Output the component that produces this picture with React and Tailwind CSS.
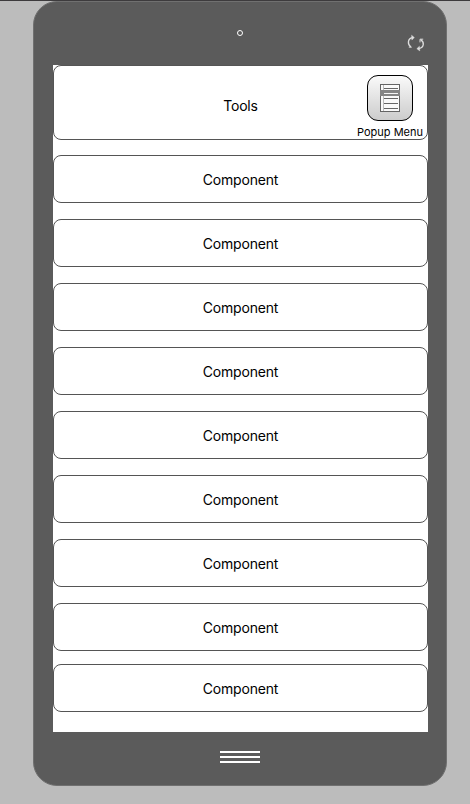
import React from "react";

function RotateIcon() {
  return (
    <svg width="18" height="18" viewBox="0 0 18 18" fill="none" stroke="#dedede" strokeWidth="1.3" className="block">
      <path d="M3.8 13 C0.2 10 0.6 4.6 5.4 3.6" />
      <path d="M4.6 1.2 L7.4 3.6 L4.9 6 Z" fill="#dedede" strokeWidth="0.4" />
      <path d="M1.8 13.2 L4.8 13.2" strokeWidth="0.9" />
      <path d="M13.6 5.6 C17.8 8.2 17 13.6 12 14.6" />
      <path d="M12.4 12.2 L9.8 14.7 L12.8 16.9 Z" fill="#dedede" strokeWidth="0.4" />
      <path d="M13 8.4 L13 5.2 L16.2 5.2" strokeWidth="1" />
    </svg>
  );
}

function MenuIcon() {
  return (
    <svg width="20" height="28" viewBox="0 0 20 28" className="block">
      <rect x="0.5" y="0.5" width="19" height="27" fill="#fafafa" stroke="#646464" />
      <rect x="3" y="1" width="1" height="26" fill="#bcbcbc" />
      <rect x="0" y="6" width="20" height="6" fill="#858585" />
      <g fill="#666666">
        <rect x="4" y="4" width="14" height="1" />
        <rect x="4" y="14" width="14" height="1" />
        <rect x="4" y="19" width="14" height="1" />
        <rect x="4" y="24" width="14" height="1" />
      </g>
      <rect x="4" y="9" width="14" height="1" fill="#f5f5f5" />
    </svg>
  );
}

function Component({ last = false }) {
  return (
    <div className={`flex h-12 shrink-0 items-center justify-center rounded-lg border border-[#555555] bg-white pt-0.5 ${last ? "mt-[13px]" : "mt-4"}`}>
      Component
    </div>
  );
}

export default function App() {
  return (
    <div className="flex h-[804px] w-[470px] flex-col border-t border-[#3d3b3d] bg-[#bcbcbc] font-['Inter','Liberation_Sans',sans-serif] text-sm leading-5 tracking-[-0.2px] text-black">
      <main className="ml-[33px] flex h-[785px] w-[414px] flex-col rounded-3xl border border-[#707070] bg-[#5b5b5b] px-[19px]">
        <header className="relative flex h-[63px] shrink-0 justify-center">
          <span className="mt-7 size-[6px] rounded-full border border-white" />
          <div className="absolute top-8 right-[2px]">
            <RotateIcon />
          </div>
        </header>
        <section className="-mr-px flex h-[667px] w-[375px] shrink-0 flex-col bg-white">
          <div className="relative flex h-[75px] shrink-0 items-center justify-center rounded-lg border border-[#555555] pt-[7px]">
            Tools
            <div className="absolute top-[9px] right-[3px] flex w-[68px] flex-col items-center">
              <div className="flex h-[46px] w-[46px] items-start justify-center rounded-[11px] border border-black bg-linear-to-b from-[#fafafa] to-[#cccccc] pt-2">
                <MenuIcon />
              </div>
              <span className="mt-1 text-[11px] leading-[14px] tracking-normal whitespace-nowrap">Popup Menu</span>
            </div>
          </div>
          <div className="-mt-px flex flex-col">
            <Component />
            <Component />
            <Component />
            <Component />
            <Component />
            <Component />
            <Component />
            <Component />
            <Component last />
          </div>
        </section>
        <footer className="mt-[19px] flex flex-col items-center gap-[3px]">
          <span className="h-0.5 w-10 bg-white" />
          <span className="h-0.5 w-10 bg-white" />
          <span className="h-0.5 w-10 bg-white" />
        </footer>
      </main>
    </div>
  );
}
